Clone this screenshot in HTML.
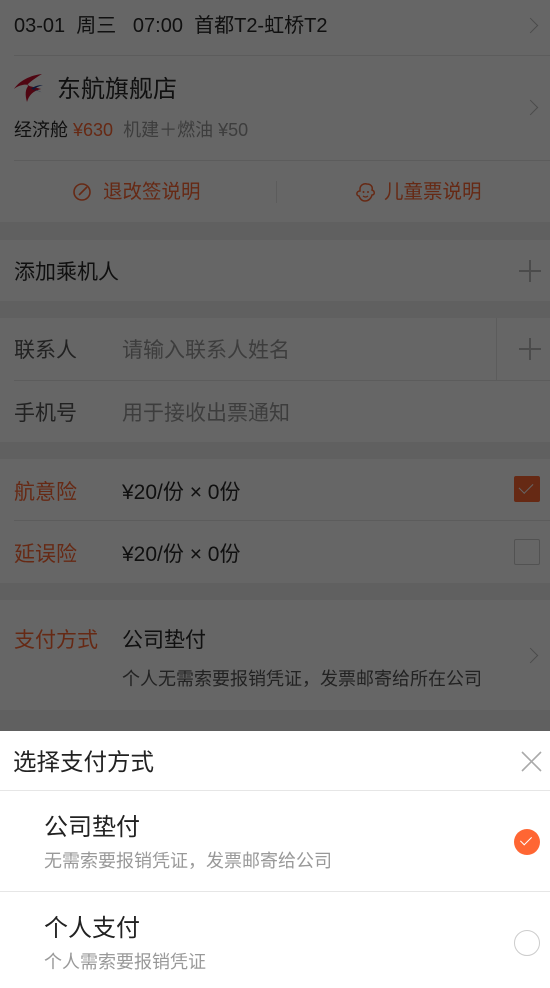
<!DOCTYPE html>
<html><head><meta charset="utf-8"><style>
*{margin:0;padding:0;box-sizing:border-box}
body{width:550px;height:988px;overflow:hidden;background:#f0f0f0;font-family:"Liberation Sans","Noto Sans CJK SC",sans-serif;color:#2a2a2a;position:relative}
.sec{background:#fff;position:absolute;left:0;width:550px}
.t{position:absolute;font-size:21px;white-space:nowrap;line-height:1;margin-top:2px}
.o{color:#ff6633}
.g{color:#999}
.line{position:absolute;left:14px;right:0;height:1px;background:#e6e6e6}
.chev{position:absolute;width:11px;height:11px;border-top:1.5px solid #bbb;border-right:1.5px solid #bbb;transform:rotate(45deg)}
.ov{position:absolute;left:0;top:0;width:550px;height:988px;background:rgba(0,0,0,0.6)}
.sheet{position:absolute;left:0;top:731px;width:550px;height:257px;background:#fff}
</style></head><body>
<div class="sec" style="top:0;height:222px">
 <div class="t" style="left:14px;top:14px;font-size:20px">03-01&nbsp; 周三 &nbsp; 07:00&nbsp; 首都T2-虹桥T2</div>
 <div class="chev" style="left:525px;top:20px"></div>
 <div class="line" style="top:55px"></div>
 <svg style="position:absolute;left:13px;top:73px" width="32" height="30" viewBox="0 0 32 30"><path d="M29 1 C18 2 6 8 1 16 C6 12 12 11 16 12 C12 16 12 22 14 29 C16 22 20 18 28 16 C22 14 18 14 14 12 C18 8 24 4 29 1Z" fill="#c8102e"/><path d="M30 12 C24 12 20 14 18 16 C22 16 26 18 30 20 C26 18 22 17 20 17 C23 14 27 13 30 12Z" fill="#1a3d8f"/></svg>
 <div class="t" style="left:57px;top:76px;font-size:24px">东航旗舰店</div>
 <div class="t" style="left:14px;top:119px;font-size:18px">经济舱 <span class="o">¥630</span> &nbsp;<span class="g">机建＋燃油 ¥50</span></div>
 <div class="chev" style="left:525px;top:102px"></div>
 <div class="line" style="top:160px"></div>
 <svg style="position:absolute;left:72px;top:182px" width="20" height="20" viewBox="0 0 20 20"><circle cx="10" cy="10" r="8" fill="none" stroke="#ff6633" stroke-width="1.6"/><path d="M7 13 L15 5" stroke="#ff6633" stroke-width="1.6"/></svg>
 <div class="t o" style="left:103px;top:181px;font-size:19.5px">退改签说明</div>
 <div style="position:absolute;left:276px;top:181px;width:1px;height:22px;background:#e6e6e6"></div>
 <svg style="position:absolute;left:355px;top:182px" width="22" height="20" viewBox="0 0 22 20"><path d="M5 7 C5 3 9 1 12 2 C16 2 18 5 17 8 C20 9 20 13 17 13 C16 17 13 19 10 19 C7 19 5 17 4 14 C1 14 1 9 5 9Z" fill="none" stroke="#ff6633" stroke-width="1.5"/><circle cx="8.5" cy="10" r="1" fill="#ff6633"/><circle cx="13" cy="10" r="1" fill="#ff6633"/><path d="M8 14 Q10.5 16 13 14" fill="none" stroke="#ff6633" stroke-width="1.3"/></svg>
 <div class="t o" style="left:384px;top:181px;font-size:19.5px">儿童票说明</div>
</div>
<div class="sec" style="top:240px;height:61px">
 <div class="t" style="left:14px;top:20px">添加乘机人</div>
 <div style="position:absolute;left:519px;top:30px;width:22px;height:1.5px;background:#bbb"></div>
 <div style="position:absolute;left:529px;top:20px;width:1.5px;height:22px;background:#bbb"></div>
</div>
<div class="sec" style="top:318px;height:124px">
 <div class="t" style="left:14px;top:20px;color:#555">联系人</div>
 <div class="t g" style="left:122px;top:20px">请输入联系人姓名</div>
 <div style="position:absolute;left:496px;top:0;width:1px;height:62px;background:#e6e6e6"></div>
 <div style="position:absolute;left:519px;top:30px;width:22px;height:1.5px;background:#bbb"></div>
 <div style="position:absolute;left:529px;top:20px;width:1.5px;height:22px;background:#bbb"></div>
 <div class="line" style="top:62px"></div>
 <div class="t" style="left:14px;top:83px;color:#555">手机号</div>
 <div class="t g" style="left:122px;top:83px">用于接收出票通知</div>
</div>
<div class="sec" style="top:459px;height:124px">
 <div class="t o" style="left:14px;top:21px">航意险</div>
 <div class="t" style="left:122px;top:21px">¥20/份 × 0份</div>
 <div style="position:absolute;left:514px;top:17px;width:26px;height:26px;background:#ff6633;border-radius:2px"></div>
 <div style="position:absolute;left:522px;top:21px;width:8px;height:13px;border-right:1.5px solid #fff;border-bottom:1.5px solid #fff;transform:rotate(45deg)"></div>
 <div class="line" style="top:61px"></div>
 <div class="t o" style="left:14px;top:83px">延误险</div>
 <div class="t" style="left:122px;top:83px">¥20/份 × 0份</div>
 <div style="position:absolute;left:514px;top:80px;width:26px;height:26px;border:1.5px solid #ccc;border-radius:2px"></div>
</div>
<div class="sec" style="top:600px;height:110px">
 <div class="t o" style="left:14px;top:28px">支付方式</div>
 <div class="t" style="left:122px;top:28px">公司垫付</div>
 <div class="t" style="left:122px;top:68px;font-size:18px;color:#555">个人无需索要报销凭证，发票邮寄给所在公司</div>
 <div class="chev" style="left:525px;top:50px"></div>
</div>
<div class="ov"></div>
<div class="sheet">
 <div class="t" style="left:13px;top:18px;font-size:23.5px;color:#222">选择支付方式</div>
 <svg style="position:absolute;left:521px;top:20px" width="21" height="21" viewBox="0 0 21 21"><path d="M1 1L20 20M20 1L1 20" stroke="#aaa" stroke-width="1.6"/></svg>
 <div style="position:absolute;left:0;right:0;top:59px;height:1px;background:#e6e6e6"></div>
 <div class="t" style="left:44px;top:83px;font-size:24px;color:#222">公司垫付</div>
 <div class="t" style="left:44px;top:119px;font-size:18px;color:#999">无需索要报销凭证，发票邮寄给公司</div>
 <div style="position:absolute;left:514px;top:98px;width:26px;height:26px;border-radius:50%;background:#ff6633"></div>
 <div style="position:absolute;left:523px;top:103px;width:6px;height:11px;border-right:1.5px solid #fff;border-bottom:1.5px solid #fff;transform:rotate(45deg)"></div>
 <div style="position:absolute;left:0;right:0;top:160px;height:1px;background:#e6e6e6"></div>
 <div class="t" style="left:44px;top:184px;font-size:24px;color:#222">个人支付</div>
 <div class="t" style="left:44px;top:220px;font-size:18px;color:#999">个人需索要报销凭证</div>
 <div style="position:absolute;left:514px;top:199px;width:26px;height:26px;border-radius:50%;border:1.5px solid #ccc"></div>
</div>
</body></html>
